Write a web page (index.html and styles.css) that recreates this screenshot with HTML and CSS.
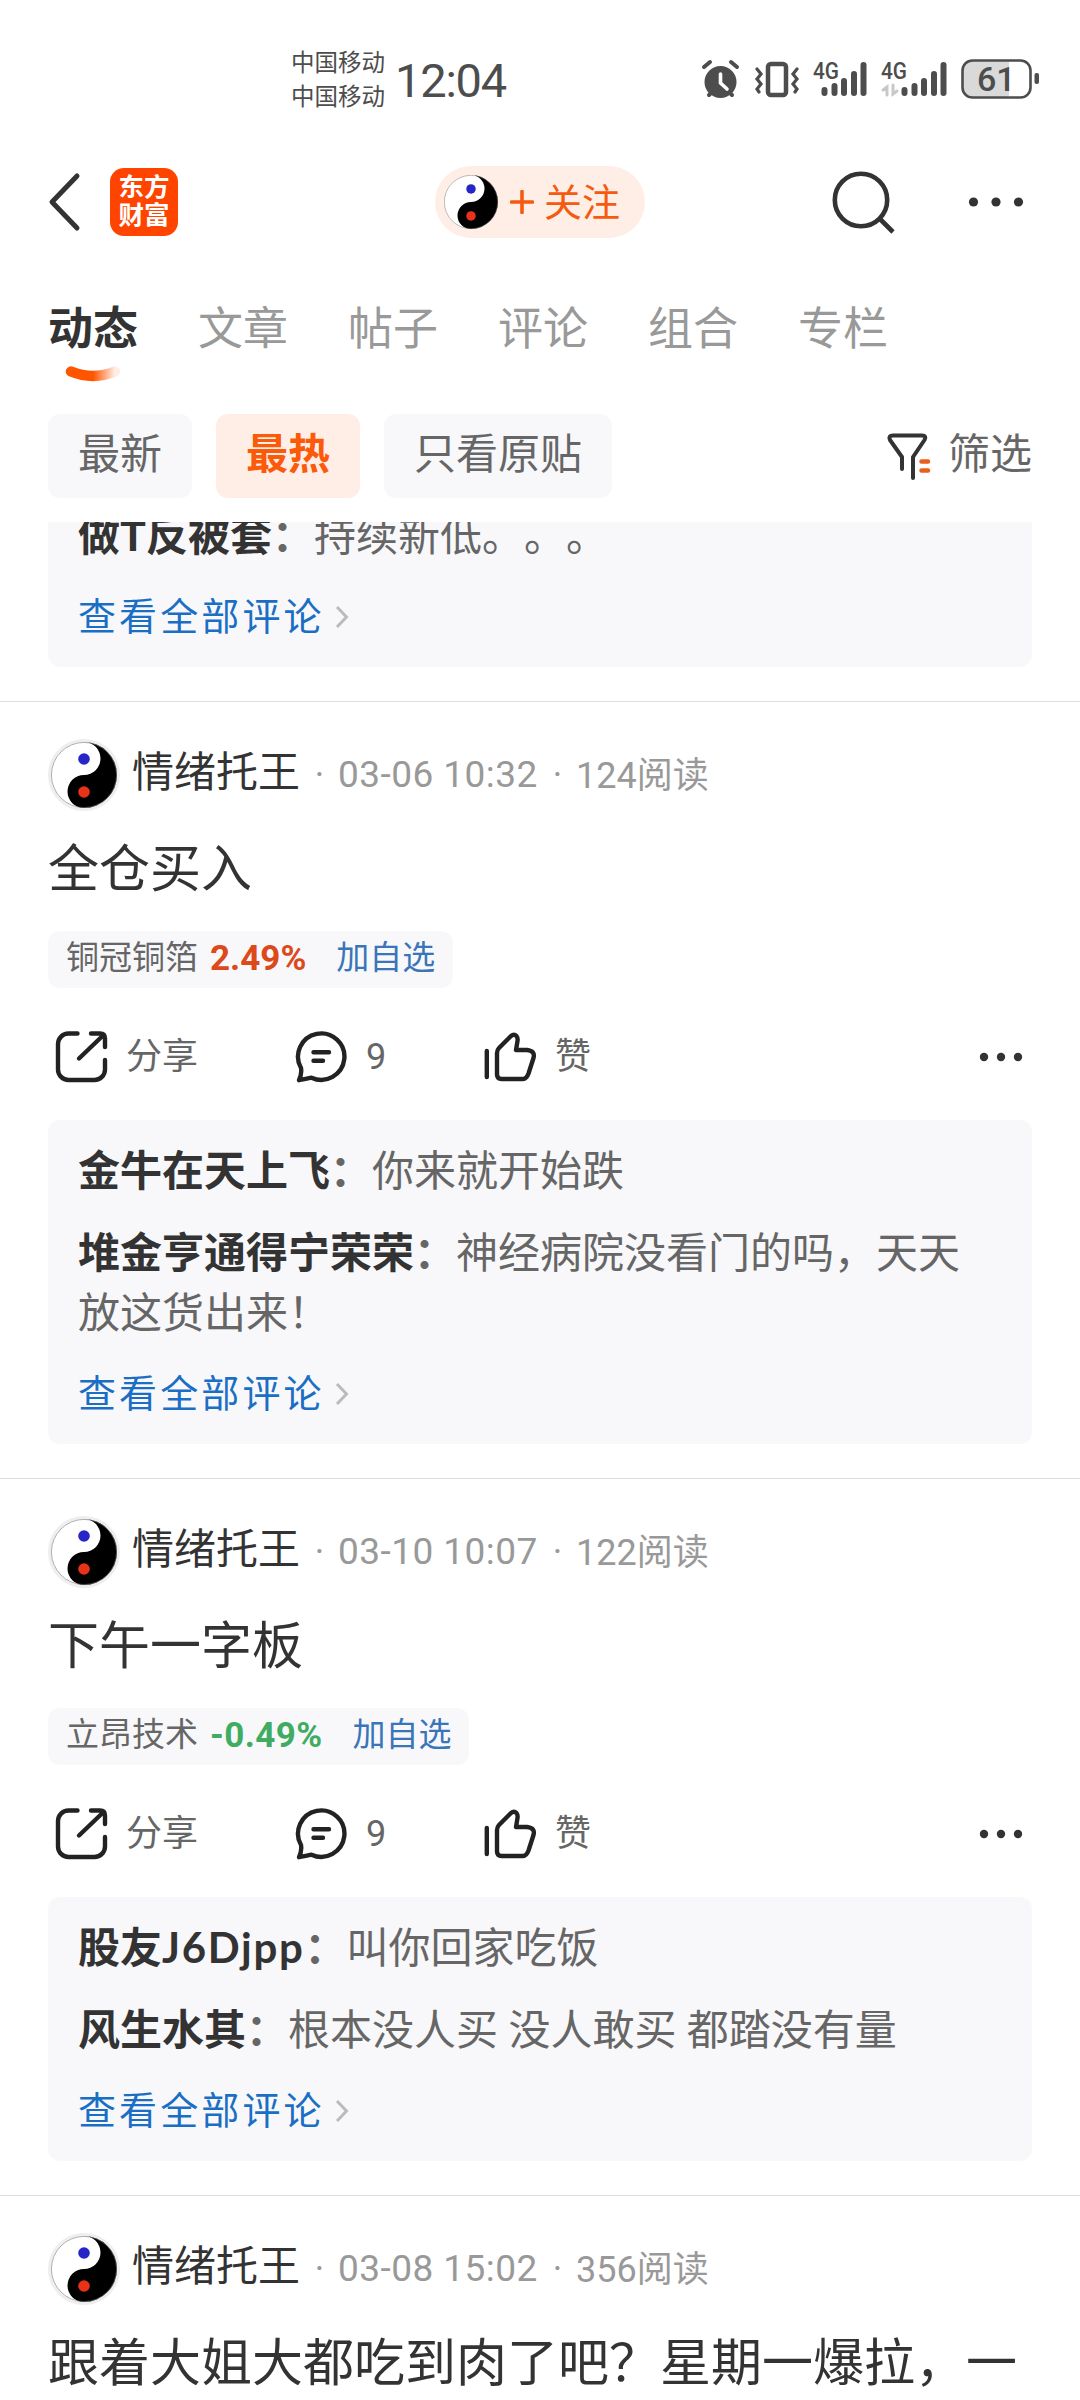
FILE: index.html
```html
<!DOCTYPE html>
<html lang="zh-CN">
<head>
<meta charset="utf-8">
<title>动态</title>
<link rel="stylesheet" href="styles.css">
</head>
<body>
<svg class="defs" width="0" height="0" aria-hidden="true">
  <defs>
    <linearGradient id="swoosh" x1="0" x2="1" y1="0" y2="0">
      <stop offset="0.5" stop-color="#ff5500"/><stop offset="1" stop-color="#ff5500" stop-opacity="0.1"/>
    </linearGradient>
    <symbol id="taiji" viewBox="0 0 66 66">
      <circle cx="33" cy="33" r="33" fill="#fff"/>
      <path d="M33 0A33 33 0 0 1 33 66A16.500 16.500 0 0 1 33 33A16.500 16.500 0 0 0 33 0Z" fill="#000"/>
      <circle cx="33" cy="33" r="32.600" fill="none" stroke="#777" stroke-width="0.600"/>
      <circle cx="33" cy="17" r="5.800" fill="#2626c8"/>
      <circle cx="33" cy="50" r="5.800" fill="#e8321a"/>
    </symbol>
    <symbol id="share" viewBox="0 0 56 56">
      <path d="M23.500 4.500H14.500A10.500 10.500 0 0 0 4 15V40.500A10.500 10.500 0 0 0 14.500 51H40.500A10.500 10.500 0 0 0 51 40.500V31M37 4.500H46Q51 4.500 51 9.500V18M49 6.500L25 29.500"/>
    </symbol>
    <symbol id="comment" viewBox="0 0 56 56">
      <path d="M7 39A23.200 23.200 0 1 1 17.500 48.700Q12 50 5 51.200Q8 45 7 39ZM19.500 23.300H35M19.500 31.700H29"/>
    </symbol>
    <symbol id="like" viewBox="0 0 56 56">
      <path d="M3.800 22V48M14 24Q14 21 16 19L28 7Q31 4.500 33.500 7Q35 9 34.500 12L33 21H44Q52.500 22 50.500 29L45.500 44.500Q43.500 50 40 50H18.500Q14 50 14 45.500Z"/>
    </symbol>
    <symbol id="more" viewBox="0 0 48 12">
      <circle cx="6" cy="6" r="4.200"/><circle cx="23" cy="6" r="4.200"/><circle cx="40" cy="6" r="4.200"/>
    </symbol>
    <symbol id="arrow" viewBox="0 0 14 24"><path d="M2 2L11.500 12L2 22" fill="none" stroke="#bbb" stroke-width="3"/></symbol>
  </defs>
</svg>

<div class="status">
  <div class="carriers"><span>中国移动</span><span>中国移动</span></div>
  <div class="clock">12:04</div>
  <svg class="status-icons" width="340" height="44" viewBox="0 0 340 44">
    <g fill="none" stroke="#4d4d4d" stroke-linecap="round">
      <circle cx="18.500" cy="23" r="16" fill="#4d4d4d" stroke="none"/>
      <path d="M2 8L8 3M35 8L29 3M7 36L10 33M30 36L27 33" stroke-width="4"/>
      <path d="M18.500 15V24L25 30" stroke="#fff" stroke-width="3.600"/>
      <rect x="66" y="5" width="18" height="31" rx="3" stroke-width="4.500"/>
      <path d="M55 10l4 5l-4 5l4 5l-4 5l2 3M95 10l-4 5l4 5l-4 5l4 5l-2 3" stroke-width="3.200"/>
      <path d="M122.500 31V34M132.500 27V34M142 22V34M152 15V34M161.500 6V34" stroke-width="6"/>
      <path d="M202.500 31V34M212.500 27V34M222 22V34M232 15V34M241.500 6V34" stroke-width="6"/>
      <path d="M185 36V28L181 31M191 26V35L195 32" stroke="#c8c8c8" stroke-width="3"/>
    </g>
    <path d="M270 2H307V38H270Q261 37 261 27V12Q261 3 270 2Z" fill="#d9d9d9"/>
    <rect x="260.500" y="1.500" width="68" height="37" rx="10" fill="none" stroke="#4d4d4d" stroke-width="2.600"/>
    <rect x="332.500" y="14" width="4.500" height="11" rx="2" fill="#4d4d4d"/>
    <g class="signal-type"><text x="111" y="20" textLength="26" lengthAdjust="spacingAndGlyphs">4G</text><text x="179" y="20" textLength="26" lengthAdjust="spacingAndGlyphs">4G</text></g>
    <text class="battery-level" x="275" y="32">61</text>
  </svg>
</div>

<header class="topbar">
  <svg class="back" width="34" height="60" viewBox="0 0 34 60"><path d="M29 4L4 30L29 56" fill="none" stroke="#333" stroke-width="5" stroke-linecap="round" stroke-linejoin="round"/></svg>
  <div class="logo"><span>东方</span><span>财富</span></div>
  <button class="follow">
    <svg width="54" height="54"><use href="#taiji"/></svg>
    <svg class="plus" width="24" height="24" viewBox="0 0 24 24"><path d="M12 1.500V22.500M1.500 12H22.500" stroke="#f45a10" stroke-width="3.600" stroke-linecap="round"/></svg>
    <span class="follow-label">关注</span>
  </button>
  <svg class="search" width="66" height="66" viewBox="0 0 66 66"><circle cx="31" cy="31" r="26.200" fill="none" stroke="#333" stroke-width="4.600"/><path d="M50 50L63 63" stroke="#333" stroke-width="4.600"/></svg>
  <svg class="menu" width="56" height="12" viewBox="0 0 56 12" fill="#333"><circle cx="5.500" cy="6" r="4.600"/><circle cx="28" cy="6" r="4.600"/><circle cx="50.500" cy="6" r="4.600"/></svg>
</header>

<nav class="tabs">
  <div class="tab active">动态<svg class="swoosh" width="58" height="18" viewBox="0 0 58 18"><path d="M7 6.500Q29 15.500 51 6.500" fill="none" stroke="url(#swoosh)" stroke-width="10.500" stroke-linecap="round"/></svg></div>
  <div class="tab">文章</div><div class="tab">帖子</div><div class="tab">评论</div><div class="tab">组合</div><div class="tab">专栏</div>
</nav>

<div class="filters">
  <div class="chip">最新</div><div class="chip hot">最热</div><div class="chip">只看原贴</div>
  <div class="filter">
    <svg width="46" height="50" viewBox="0 0 46 50" fill="none" stroke-linecap="round" stroke-linejoin="round"><path d="M16 37V25L4 8Q2 3.500 7 3.500H36Q41 3.500 38.500 8L27 25V46" stroke="#333" stroke-width="4"/><path d="M35.500 29.500H42M35.500 38.500H42" stroke="#e8601c" stroke-width="4.500"/></svg>
    <span>筛选</span>
  </div>
</div>

<main class="feed">
  <article class="post first">
    <div class="comments">
      <p><b>做T反被套</b><span class="colon">：</span>持续新低。。。</p>
      <a class="all">查看全部评论<svg width="14" height="24"><use href="#arrow"/></svg></a>
    </div>
  </article>

  <article class="post">
    <div class="author"><span class="avatar"><svg width="66" height="66"><use href="#taiji"/></svg></span><span class="name">情绪托王</span><span class="dot">·</span><span class="date">03-06 10:32</span><span class="dot">·</span><span class="reads">124阅读</span></div>
    <h2>全仓买入</h2>
    <div class="stock"><span>铜冠铜箔</span><b class="up">2.49%</b><a>加自选</a></div>
    <div class="actions">
      <div class="action share"><svg width="56" height="56"><use href="#share"/></svg>分享</div>
      <div class="action reply"><svg width="56" height="56"><use href="#comment"/></svg>9</div>
      <div class="action like"><svg width="56" height="56"><use href="#like"/></svg>赞</div>
      <svg class="more" width="48" height="12"><use href="#more"/></svg>
    </div>
    <div class="comments">
      <p><b>金牛在天上飞</b><span class="colon">：</span>你来就开始跌</p>
      <p><b>堆金亨通得宁荣荣</b><span class="colon">：</span>神经病院没看门的吗，天天<br>放这货出来！</p>
      <a class="all">查看全部评论<svg width="14" height="24"><use href="#arrow"/></svg></a>
    </div>
  </article>

  <article class="post">
    <div class="author"><span class="avatar"><svg width="66" height="66"><use href="#taiji"/></svg></span><span class="name">情绪托王</span><span class="dot">·</span><span class="date">03-10 10:07</span><span class="dot">·</span><span class="reads">122阅读</span></div>
    <h2>下午一字板</h2>
    <div class="stock"><span>立昂技术</span><b class="down">-0.49%</b><a>加自选</a></div>
    <div class="actions">
      <div class="action share"><svg width="56" height="56"><use href="#share"/></svg>分享</div>
      <div class="action reply"><svg width="56" height="56"><use href="#comment"/></svg>9</div>
      <div class="action like"><svg width="56" height="56"><use href="#like"/></svg>赞</div>
      <svg class="more" width="48" height="12"><use href="#more"/></svg>
    </div>
    <div class="comments">
      <p><b>股友<span class="latin">J6Djpp</span></b><span class="colon">：</span>叫你回家吃饭</p>
      <p><b>风生水其</b><span class="colon">：</span>根本没人买 没人敢买 都踏没有量</p>
      <a class="all">查看全部评论<svg width="14" height="24"><use href="#arrow"/></svg></a>
    </div>
  </article>

  <article class="post">
    <div class="author"><span class="avatar"><svg width="66" height="66"><use href="#taiji"/></svg></span><span class="name">情绪托王</span><span class="dot">·</span><span class="date">03-08 15:02</span><span class="dot">·</span><span class="reads">356阅读</span></div>
    <h2>跟着大姐大都吃到肉了吧？星期一爆拉，一</h2>
  </article>
</main>
</body>
</html>
```
FILE: styles.css
```css
* { box-sizing: border-box; margin: 0; padding: 0; }
body {
  width: 1080px; height: 2400px; overflow: hidden;
  display: flex; flex-direction: column;
  background: #fff; color: #333;
  font-family: Roboto, "Noto Sans CJK SC", sans-serif;
  white-space: nowrap;
  text-spacing-trim: space-all;
}
svg { display: block; flex: none; }
.defs { position: absolute; }

.status { height: 150px; padding: 41px 0 0 291px; display: flex; flex: none; color: #4d4d4d; }
.carriers { width: 104px; display: flex; flex-direction: column; padding-top: 5px; font-size: 23.5px; line-height: 34px; }
.clock { width: 307px; font-size: 47px; line-height: 80px; letter-spacing: -1.2px; }
.status-icons { margin-top: 18px; overflow: visible; }
.signal-type { font: 500 24px Roboto, sans-serif; fill: #4d4d4d; }
.battery-level { font: 500 34px Roboto, sans-serif; fill: #4d4d4d; }

.topbar { height: 104px; flex: none; padding-left: 48px; display: flex; align-items: center; }
.logo {
  width: 68px; height: 68px; margin-left: 28px; padding-top: 5px; border-radius: 14px;
  background: #ff4400; color: #fff; display: flex; flex-direction: column; align-items: center;
  font-size: 25.5px; font-weight: 700; line-height: 28px;
}
.follow {
  width: 210px; height: 72px; margin-left: 257px; padding: 0 0 0 9px; border: 0; border-radius: 36px;
  background: #ffeee6; color: #f45a10; display: flex; align-items: center; font: inherit; font-size: 38px;
}
.follow-label { padding-bottom: 5px; }
.plus { margin: 0 10px 0 12px; }
.search { margin-left: 185px; }
.menu { margin-left: 72px; }

.tabs { height: 160px; flex: none; padding: 44px 48px 0; display: flex; gap: 60px; font-size: 45px; line-height: 64px; color: #999; }
.tab { width: 90px; }
.active { color: #333; font-weight: 700; }
.swoosh { margin: 3px 0 0 16px; }

.filters { height: 84px; flex: none; padding: 0 48px; display: flex; gap: 24px; font-size: 42px; line-height: 81px; color: #666; }
.chip { padding: 0 30px; border-radius: 12px; background: #f8f8fb; }
.hot { background: #ffeee6; color: #fa5a0a; font-weight: 700; }
.filter { margin-left: auto; display: flex; gap: 16px; }
.filter svg { margin-top: 18px; }

.feed { margin-top: 24px; flex: 1; overflow: hidden; }
.post { padding: 37px 48px 34px; border-bottom: 1px solid #dedede; }
.first { padding-top: 0; }
.author { height: 72px; display: flex; align-items: center; color: #999; font-size: 36px; }
.avatar { width: 72px; height: 72px; border: 3px solid #eee; border-radius: 50%; }
.name { margin-left: 12px; width: 169px; padding-bottom: 4px; font-size: 42px; line-height: 60px; color: #333; }
.dot { width: 37px; text-align: center; }
.date { width: 201px; padding-bottom: 1px; font-size: 37px; letter-spacing: 0.450px; }
.reads { padding-bottom: 7px; }

h2 { margin-top: 22px; font-size: 51px; font-weight: 400; line-height: 74px; }
.stock {
  width: max-content; height: 57px; margin-top: 24px; padding: 0 18px; border-radius: 12px; background: #f8f8fb;
  display: flex; font-size: 33px; line-height: 54px; color: #666;
}
.stock b { margin: 0 30px 0 12px; font-size: 35px; line-height: 56px; }
.stock a { color: #3a75b8; }
.up { color: #dc491b; }
.down { color: #3fac62; letter-spacing: 0.400px; }
.actions { height: 56px; margin-top: 41px; padding: 0 6px; display: flex; align-items: center; font-size: 36px; line-height: 52px; color: #666; }
.action { display: flex; align-items: center; gap: 16px; }
.action svg { fill: none; stroke: #222; stroke-width: 4.400; stroke-linecap: round; stroke-linejoin: round; }
.share { width: 240px; }
.reply { width: 189px; }
.more { margin-left: auto; fill: #333; }
.comments { margin-top: 35px; padding: 22px 30px 20px; border-radius: 12px; background: #f8f8fb; font-size: 42px; line-height: 60px; color: #666; }
.first .comments { margin-top: -37px; }
.comments p { margin-bottom: 22px; }
.comments p:nth-last-child(2) { margin-bottom: 20px; }
.comments b { color: #333; }
.colon { font-weight: 700; }
.latin { font-family: Lato, sans-serif; line-height: 1; letter-spacing: 1.700px; }
.all { display: flex; align-items: center; gap: 10px; font-size: 38px; letter-spacing: 3.100px; color: #1a6fc4; }
```
